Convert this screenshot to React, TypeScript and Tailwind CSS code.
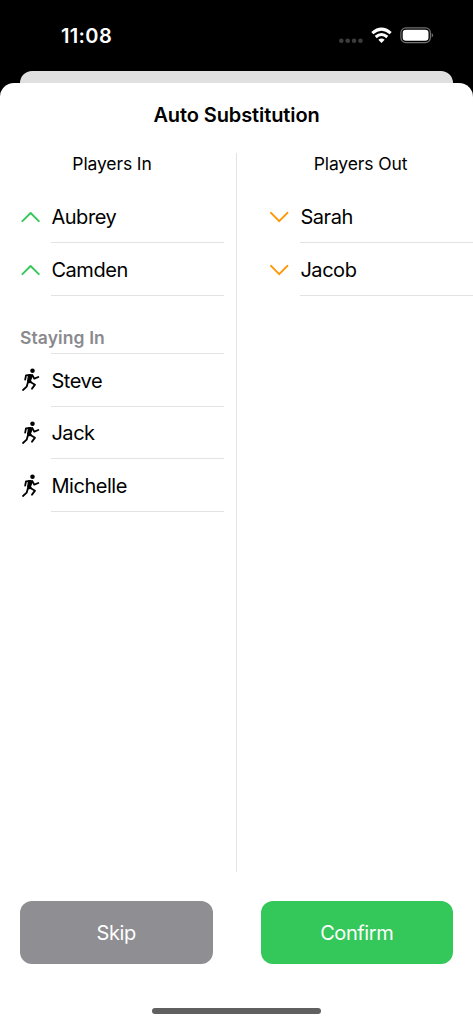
import type { ReactNode } from "react";

function Chevron({ up }: { up: boolean }) {
  return (
    <svg
      className={up ? "h-3 w-5 text-[#34c759]" : "h-3 w-5 text-[#ff9500]"}
      viewBox="0 0 20 12"
      fill="none"
      stroke="currentColor"
      strokeWidth="1.9"
      strokeLinecap="round"
      strokeLinejoin="round"
    >
      <path d={up ? "M2.400 10.2 10.600 2 18.800 10.2" : "M2 1.8 10.2 10.2 18.4 1.8"} />
    </svg>
  );
}

function Runner() {
  return (
    <svg
      className="-mt-[2px] h-6 w-5"
      viewBox="60 145 60 72"
      fill="none"
      stroke="black"
      strokeWidth="5.500"
      strokeLinecap="round"
      strokeLinejoin="round"
    >
      <circle cx="97.5" cy="153.5" r="6.8" fill="black" stroke="none" />
      <path d="M91 166 78 167 75.500 180" />
      <path d="M97 167 103 177 115 172" />
      <path d="M86 166 97 166 91 183 94 188 86 189 83 184Z" fill="black" strokeWidth="4" />
      <path d="M90 186 105 195 96 207" />
      <path d="M84 187 80 201 69 211" />
    </svg>
  );
}

function Row({ icon, name }: { icon: ReactNode; name: string }) {
  return (
    <div className="flex h-[52.85px]">
      <div className="flex w-[31.4px] items-center pt-[2px]">{icon}</div>
      <div className="flex flex-1 items-center border-b border-[#e3e3e4] pt-[2px] text-[20px] leading-6 tracking-[-0.45px]">
        {name}
      </div>
    </div>
  );
}

export default function App() {
  return (
    <div className="flex h-[1024px] w-[473px] flex-col overflow-hidden bg-black font-['Inter',sans-serif] text-black">
      <header className="flex h-[71px] shrink-0 justify-between pr-[39px] pl-[61px] text-white">
        <span className="pt-[24px] text-[20px] leading-6 font-semibold tracking-[0.35px]">11:08</span>
        <svg className="mt-[26px] h-[20px] w-[96px]" viewBox="338 26 96 20">
          <g fill="#3c3c3c">
            <circle cx="341.3" cy="40.8" r="2.3" />
            <circle cx="347.7" cy="40.8" r="2.3" />
            <circle cx="354.1" cy="40.8" r="2.3" />
            <circle cx="360.5" cy="40.8" r="2.3" />
          </g>
          <g fill="none" stroke="white" strokeWidth="3">
            <path d="M372.300 33.100 Q381.500 25.100 390.700 33.100" />
            <path d="M375.700 37 Q381.500 32 387.300 37" />
          </g>
          <path d="M378.300 39.700 Q381.500 37.200 384.700 39.700 L381.500 43Z" fill="white" />
          <rect x="400.900" y="27.900" width="29.500" height="14.700" rx="4.800" fill="none" stroke="#707070" strokeWidth="1.200" />
          <rect x="402.700" y="29.700" width="25.800" height="11.100" rx="3.300" fill="white" />
          <path d="M431.700 33 Q434.500 35.200 431.700 37.500Z" fill="#707070" />
        </svg>
      </header>
      <div className="mx-[20px] h-[12px] shrink-0 rounded-t-[12px] bg-[#e0e0e0]" />
      <main className="flex flex-1 flex-col rounded-t-[14px] bg-white">
        <h1 className="h-[70px] pt-[20px] text-center text-[20px] leading-6 font-semibold tracking-[-0.1px]">
          Auto Substitution
        </h1>
        <div className="flex h-[719px]">
          <section className="w-[237px] border-r border-[#e3e3e4] pr-[12px] pl-[20px]">
            <h2 className="h-[37px] pr-[20px] text-center text-[17.500px] leading-[22px] tracking-[-0.12px]">Players In</h2>
            <Row icon={<Chevron up />} name="Aubrey" />
            <Row icon={<Chevron up />} name="Camden" />
            <div className="flex h-[58px] flex-col justify-end">
              <h3 className="pb-[4px] text-[17.500px] leading-[22px] font-semibold tracking-[0.1px] text-[#8a8a8e]">
                Staying In
              </h3>
              <div className="ml-[31.4px] h-px bg-[#e3e3e4]" />
            </div>
            <Row icon={<Runner />} name="Steve" />
            <Row icon={<Runner />} name="Jack" />
            <Row icon={<Runner />} name="Michelle" />
          </section>
          <section className="flex-1 pl-[32px]">
            <h2 className="h-[37px] pr-[21px] text-center text-[17.500px] leading-[22px] tracking-[-0.12px]">Players Out</h2>
            <Row icon={<Chevron up={false} />} name="Sarah" />
            <Row icon={<Chevron up={false} />} name="Jacob" />
          </section>
        </div>
        <div className="mt-[29px] flex gap-[48px] px-[20px] text-[20px] tracking-[-0.4px] text-white">
          <button className="h-[63px] flex-1 rounded-[12px] bg-[#8e8e93]">Skip</button>
          <button className="h-[63px] flex-1 rounded-[12px] bg-[#34c759]">Confirm</button>
        </div>
        <div className="mx-auto mt-[44px] h-[6px] w-[169px] rounded-full bg-[#606060]" />
      </main>
    </div>
  );
}
